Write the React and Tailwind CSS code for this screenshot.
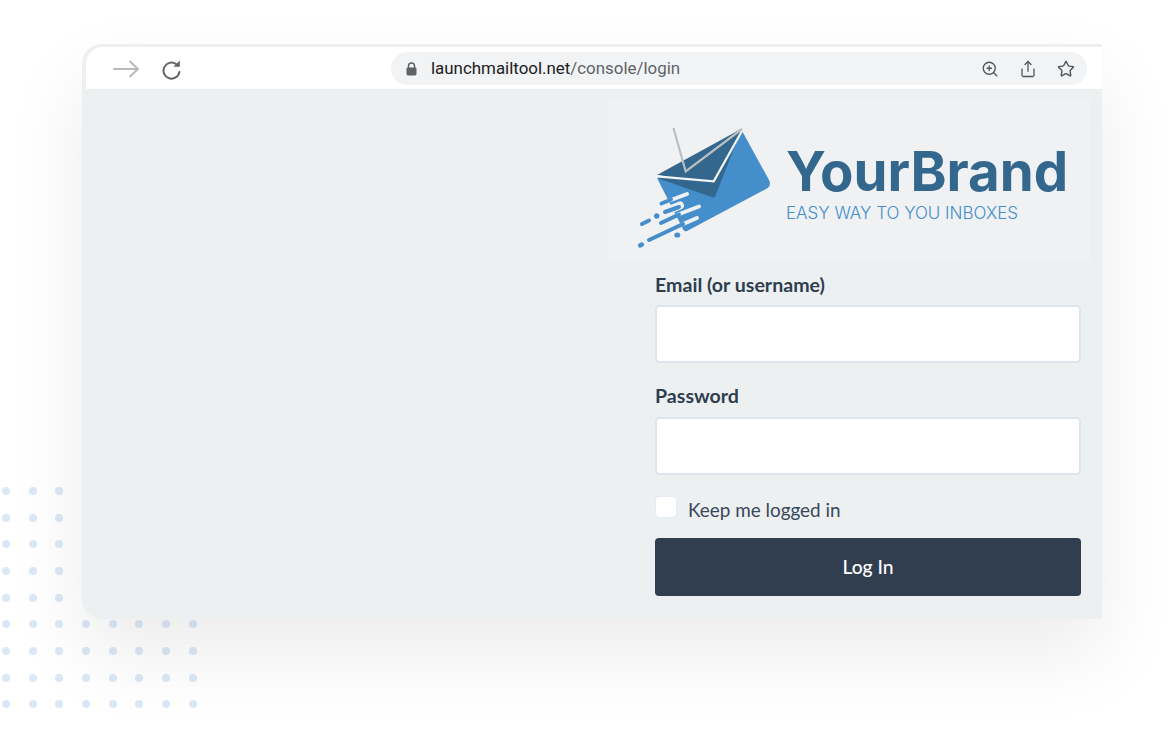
import React from "react";
import { ZoomIn, Share, Star } from "lucide-react";

const dots = Array.from({ length: 72 });

function Logo() {
  const blue = "#458ecc";
  const dark = "#33678e";
  const bg = "#eff1f2";
  return (
    <svg width="142" height="130" viewBox="636 122 142 130" className="mt-[24px] shrink-0 self-start">
      <path d="M741 129 L769 180 Q772 186 766 189 L687 231 Q684 232 683 229 L657 178 Z" fill={blue} />
      <path d="M658.5 178.5 L714.5 198 L741 131 Z" fill={dark} />
      <path d="M657 175 L742 128.5 L714 180.5 Z" fill={dark} />
      <path d="M657 176.3 L713.7 181.3 L742.5 130" fill="none" stroke="#f4f5f6" strokeWidth="2.2" />
      <path d="M673.5 128 L685.7 171.5 L742 129" fill="none" stroke="#bcbfc2" strokeWidth="2.2" />
      <g fill="none" strokeLinecap="round" strokeWidth="4">
        <path d="M671 200 L687 194" stroke={bg} />
        <path d="M661.5 203.5 L671 199.5" stroke={blue} />
        <path d="M670 209.5 L680 205.5" stroke={bg} strokeWidth="8" />
        <path d="M665 212 L679 207" stroke={blue} />
        <path d="M678 214.5 L699 206.5" stroke={bg} />
        <path d="M661 223 L679 214.5" stroke={blue} />
        <path d="M682 224.5 L697 218" stroke={bg} />
        <path d="M649 240 L683 224" stroke={blue} />
        <path d="M642 224 L649 220.5" stroke={blue} />
      </g>
      <circle cx="656.7" cy="216" r="2.7" fill={blue} />
      <ellipse cx="677.3" cy="235" rx="3" ry="2.6" fill={blue} />
      <ellipse cx="641" cy="245" rx="3.2" ry="2.4" fill={blue} transform="rotate(-28 641 245)" />
    </svg>
  );
}

export default function App() {
  return (
    <div className="relative h-[736px] w-[1174px] overflow-hidden bg-white pl-[82px] pt-[44px] font-['Lato',sans-serif]">
      <div className="absolute left-[2px] top-[487px] grid grid-cols-[repeat(8,26.67px)] grid-rows-[repeat(9,26.67px)]">
        {dots.map((_, i) => (
          <span key={i} className="h-2 w-2 rounded-full bg-[#dbe8f8]" />
        ))}
      </div>

      <div className="relative flex h-[575px] w-[1020px] flex-col rounded-l-[20px] bg-[#ecf0f1] shadow-[0_35px_80px_rgba(0,0,0,0.08)]">
        <div className="ml-1 mt-[3px] flex h-[42px] shrink-0 items-center rounded-tl-[17px] bg-white">
          <div className="flex w-[305px] shrink-0 items-center pl-[27px] pt-[2px]">
            <svg width="26" height="18" viewBox="0 0 26 18" fill="none" stroke="#b9b9b9" strokeWidth="2" strokeLinecap="round" strokeLinejoin="round">
              <path d="M1 9 H25 M17 1.5 L25 9 L17 16.5" />
            </svg>
            <svg width="20" height="21" viewBox="0 0 20 21" className="ml-[23px]">
              <path d="M17.4 12.9 A8 8 0 1 1 14 5" fill="none" stroke="#5f6368" strokeWidth="2" strokeLinecap="round" />
              <path d="M17.8 1.5 L17.8 7.8 L11.5 7.8 Z" fill="#5f6368" />
            </svg>
          </div>
          <div className="flex h-[33px] w-[696px] items-center rounded-full bg-[#f1f3f4] pl-[15px] pr-[12px] pt-[1px]">
            <svg width="11" height="14" viewBox="0 0 11 14" className="shrink-0">
              <path d="M2.5 6 V4 a3 3 0 0 1 6 0 V6" fill="none" stroke="#5f6368" strokeWidth="1.5" />
              <rect x="0.5" y="5.5" width="10" height="8" rx="1.4" fill="#5f6368" />
            </svg>
            <span className="ml-[14px] font-['Roboto',sans-serif] text-[16.9px] text-[#202124]">
              launchmailtool.net<span className="text-[#5f6368]">/console/login</span>
            </span>
            <div className="ml-auto flex items-center gap-[20px] text-[#4f5358]">
              <ZoomIn size={18} strokeWidth={1.7} />
              <Share size={18} strokeWidth={1.7} />
              <Star size={18} strokeWidth={1.9} />
            </div>
          </div>
        </div>

        <div className="flex flex-col items-end">
          <div className="mr-[12px] mt-[9px] flex h-[164px] w-[482px] bg-[#eff1f2] pl-[28px]">
            <Logo />
            <div className="ml-[8px] mt-[43px] font-['Inter',sans-serif]">
              <div className="text-[54.6px] font-bold leading-[60px] text-[#33678e]">YourBrand</div>
              <div className="mt-[2px] text-[17px] font-light leading-[20px] text-[#458ecc]">EASY WAY TO YOU INBOXES</div>
            </div>
          </div>

          <form className="mr-[21px] w-[426px]">
            <label className="mt-[11px] block text-[19.6px] font-bold leading-[24px] text-[#2f3d4f]">Email (or username)</label>
            <div className="mt-[8px] h-[58px] rounded border-2 border-[#dfe5ec] bg-white" />
            <label className="mt-[21px] block text-[19.6px] font-bold leading-[24px] text-[#2f3d4f]">Password</label>
            <div className="mt-[9px] h-[58px] rounded border-2 border-[#dfe5ec] bg-white" />
            <div className="mt-[21px] flex items-start">
              <span className="h-[22px] w-[22px] rounded-[4px] border border-[#e6eaf2] bg-white" />
              <span className="ml-[11px] mt-[2px] text-[18.9px] leading-[24px] text-[#39475a]">Keep me logged in</span>
            </div>
            <button type="button" className="mt-[16px] flex h-[58px] w-full items-center justify-center rounded bg-[#313e50] text-[19.3px] font-medium text-white">
              Log In
            </button>
          </form>
        </div>
      </div>
    </div>
  );
}
